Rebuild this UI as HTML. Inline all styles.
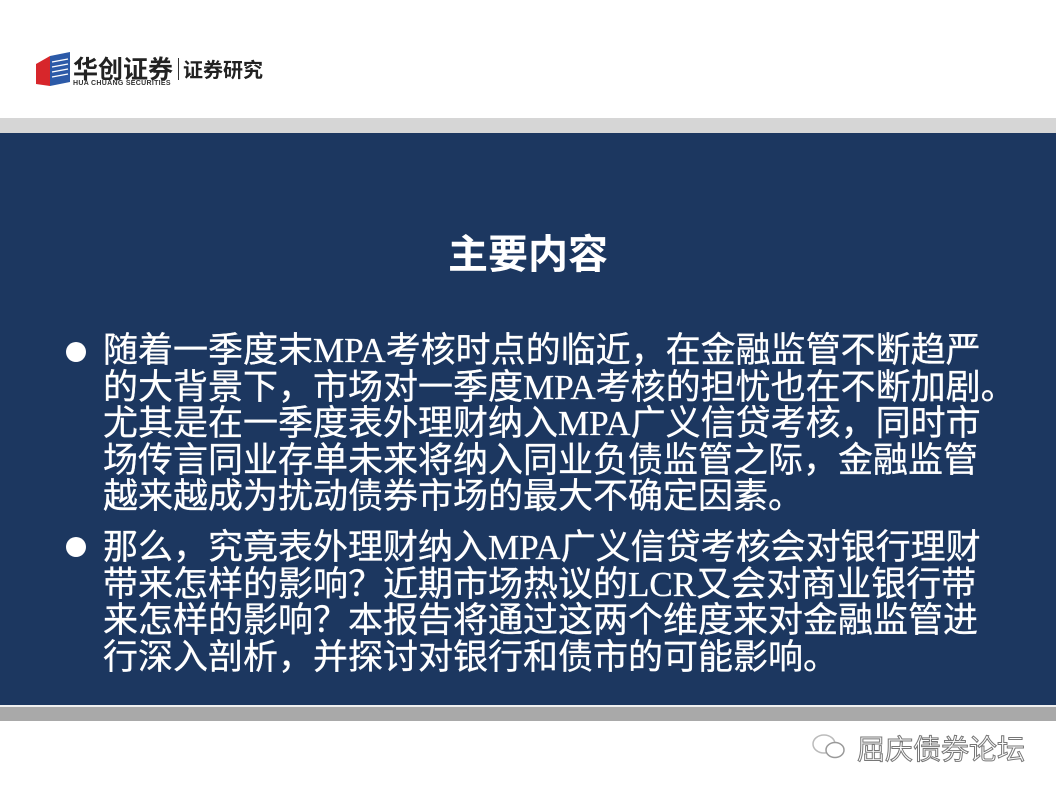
<!DOCTYPE html>
<html><head><meta charset="utf-8"><style>
body{margin:0;width:1056px;height:792px;background:#fff;position:relative;overflow:hidden;font-family:"Liberation Serif","Noto Sans CJK SC",sans-serif}
.topband{position:absolute;left:0;top:118px;width:1056px;height:15px;background:#d6d6d6}
.navy{position:absolute;left:0;top:133px;width:1056px;height:572px;background:#1c3760}
.wl{position:absolute;left:0;top:705px;width:1056px;height:2px;background:#f0f0f0}
.gray{position:absolute;left:0;top:707px;width:1056px;height:14px;background:#a9a9a9}
.title{position:absolute;left:0;width:1056px;top:222px;text-align:center;color:#fff;font:bold 40px "Noto Sans CJK SC",sans-serif}
.p{position:absolute;left:103px;width:950px;white-space:nowrap;color:#fff;font-size:35px;line-height:36.5px;-webkit-text-stroke:0.3px #fff}
.dot{position:absolute;left:66px;width:20px;height:20px;border-radius:50%;background:#fff}
.logo{position:absolute;left:36px;top:52px}
</style></head><body>
<svg class="logo" width="34" height="36" viewBox="0 0 34 36">
<polygon points="0,12 14,4 14,34 0,32" fill="#d7262b"/>
<polygon points="14,4 34,0 34,30 14,34" fill="#2c5aa8"/>
<g stroke="#fff" stroke-width="1.3"><line x1="16" y1="10" x2="32" y2="7"/><line x1="16" y1="15" x2="32" y2="12"/><line x1="16" y1="20" x2="32" y2="17"/><line x1="16" y1="25" x2="32" y2="22"/></g>
</svg>
<div style="position:absolute;left:73px;top:50px;font:bold 25px 'Noto Sans CJK SC',sans-serif;color:#222">华创证券</div>
<div style="position:absolute;left:178px;top:58px;width:1px;height:22px;background:#333"></div>
<div style="position:absolute;left:183px;top:54px;font:bold 20px 'Noto Sans CJK SC',sans-serif;color:#222">证券研究</div>
<div style="position:absolute;left:73px;top:80px;font:bold 7px 'Liberation Sans',sans-serif;color:#333;letter-spacing:0.3px">HUA CHUANG SECURITIES</div>
<div class="topband"></div>
<div class="navy"></div>
<div class="wl"></div>
<div class="gray"></div>
<div class="title">主要内容</div>
<div class="dot" style="top:342px"></div>
<div class="p" style="top:333px">随着一季度末MPA考核时点的临近，在金融监管不断趋严<br>的大背景下，市场对一季度MPA考核的担忧也在不断加剧。<br>尤其是在一季度表外理财纳入MPA广义信贷考核，同时市<br>场传言同业存单未来将纳入同业负债监管之际，金融监管<br>越来越成为扰动债券市场的最大不确定因素。</div>
<div class="dot" style="top:537px"></div>
<div class="p" style="top:530px">那么，究竟表外理财纳入MPA广义信贷考核会对银行理财<br>带来怎样的影响？近期市场热议的LCR又会对商业银行带<br>来怎样的影响？本报告将通过这两个维度来对金融监管进<br>行深入剖析，并探讨对银行和债市的可能影响。</div>
<svg style="position:absolute;left:810px;top:732px" width="40" height="30" viewBox="0 0 40 30"><ellipse cx="14" cy="12" rx="11" ry="9" fill="none" stroke="#bbb" stroke-width="1.5"/><ellipse cx="25" cy="18" rx="9" ry="7.5" fill="#fff" stroke="#999" stroke-width="1.5"/></svg>
<div style="position:absolute;left:857px;top:728px;font:28px 'Noto Sans CJK SC',sans-serif;color:#fff;-webkit-text-stroke:1px #777">屈庆债券论坛</div>
</body></html>
